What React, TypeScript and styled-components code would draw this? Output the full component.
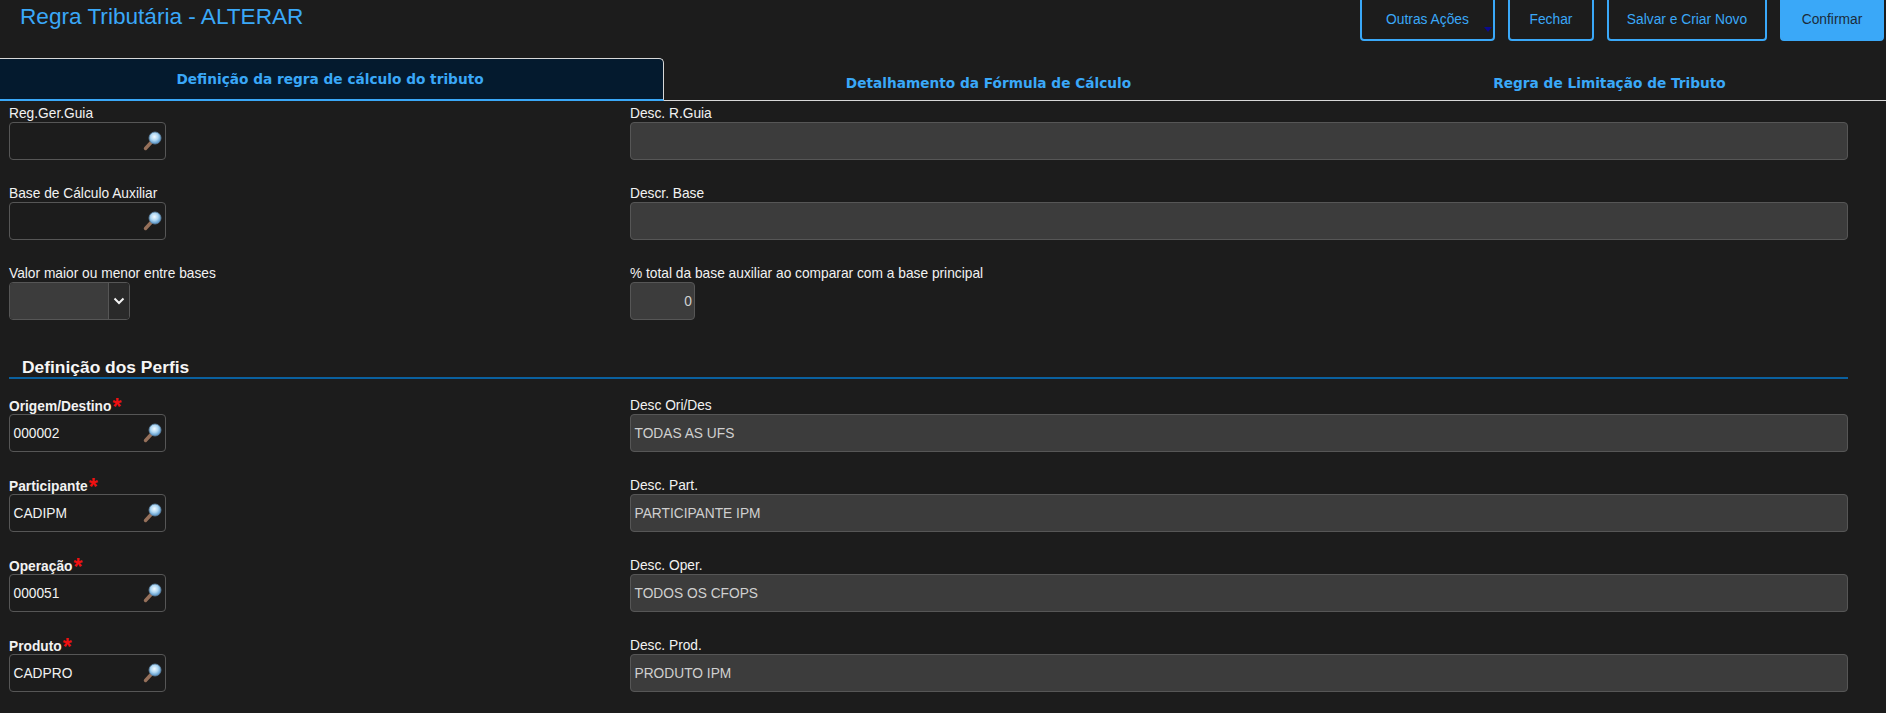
import { createGlobalStyle } from "styled-components";
import styled from "styled-components";

const GlobalStyle = createGlobalStyle`
    html, body {
        margin: 0;
        padding: 0;
        height: 713px;
        overflow: hidden;
        background: #1c1c1c;
        font-family: "Liberation Sans", Arial, sans-serif;
    }
    * { box-sizing: border-box; }
`

const Page = styled.div`
    width: 1886px;
    height: 713px;
    overflow: hidden;
    background: #1c1c1c;
`

const Header = styled.div`
    display: flex;
    justify-content: space-between;
    height: 58px;
    padding-left: 20px;
`

const Title = styled.h1`
    margin: 0;
    font-size: 22.6px;
    font-weight: 400;
    line-height: 34px;
    color: #3aa8f8;
`

const Actions = styled.div`
    display: flex;
    align-items: flex-start;
    gap: 13px;
    padding-right: 2px;
    margin-top: -4px;
`

const ActionButton = styled.button<{ $primary?: boolean; $w: number }>`
    position: relative;
    width: ${(p) => p.$w}px;
    height: 45px;
    border: 2px solid #3aa8f8;
    border-radius: 4px;
    background: ${(p) => (p.$primary ? "#3aa8f8" : "transparent")};
    color: ${(p) => (p.$primary ? "#1c2b3a" : "#3aa8f8")};
    font-family: inherit;
    font-size: 13.8px;
    padding: 2px 0 0;
`

const Caret = styled.span`
    position: absolute;
    right: 1px;
    bottom: 7px;
    width: 0;
    height: 0;
    border-left: 4px solid transparent;
    border-right: 4px solid transparent;
    border-top: 5px solid #0a0a8c;
`

const TabBar = styled.div`
    display: flex;
    height: 43px;
    border-bottom: 1px solid #d8d8d8;
`

const Tab = styled.div<{ $active?: boolean; $w: number; $shift?: number }>`
    width: ${(p) => p.$w}px;
    height: ${(p) => (p.$active ? "43px" : "42px")};
    display: flex;
    align-items: ${(p) => (p.$active ? "center" : "flex-end")};
    justify-content: center;
    padding-bottom: ${(p) => (p.$active ? "0" : "9px")};
    padding-left: ${(p) => p.$shift ?? 0}px;
    font-family: "DejaVu Sans", Verdana, sans-serif;
    font-size: 13.7px;
    font-weight: 700;
    color: #3aa8f8;
    ${(p) =>
        p.$active &&
        `
        background: #041a2e;
        border: 1px solid #d8d8d8;
        border-left: none;
        border-bottom: 2px solid #3aa8f8;
        border-top-right-radius: 5px;
        padding-right: 3px;
    `}
`

const Form = styled.div`
    padding: 3px 38px 0 9px;
`

const Row = styled.div`
    display: grid;
    grid-template-columns: 621px 1fr;
    height: 80px;
`

const Field = styled.div`
    display: flex;
    flex-direction: column;
    align-items: flex-start;
`

const Label = styled.label<{ $bold?: boolean }>`
    display: block;
    height: 18px;
    font-size: 13.75px;
    line-height: ${(p) => (p.$bold ? 22 : 20)}px;
    font-weight: ${(p) => (p.$bold ? 700 : 400)};
    color: #f2f2f2;
    white-space: nowrap;
`

const Star = styled.span`
    position: relative;
    top: 4px;
    color: #f01010;
    font-size: 23px;
    font-weight: 700;
    line-height: 14px;
    vertical-align: top;
    margin-left: 1px;
`

const InputBox = styled.div<{ $disabled?: boolean; $w?: number; $right?: boolean }>`
    width: ${(p) => (p.$w ? `${p.$w}px` : "100%")};
    height: 38px;
    display: flex;
    align-items: center;
    justify-content: ${(p) => (p.$right ? "flex-end" : "space-between")};
    padding: 0 2px 0 3.5px;
    border: 1px solid #565656;
    border-radius: 4px;
    background: ${(p) => (p.$disabled ? "#3c3c3c" : "transparent")};
    color: ${(p) => (p.$disabled ? "#d0d0d0" : "#f2f2f2")};
    font-size: 13.75px;
`

const SelectBox = styled.div`
    width: 121px;
    height: 38px;
    display: flex;
    border: 1px solid #565656;
    border-radius: 4px;
    overflow: hidden;
`

const SelectValue = styled.div`
    width: 99px;
    background: #3c3c3c;
    border-right: 1px solid #565656;
`

const SelectArrow = styled.div`
    flex: 1;
    display: flex;
    align-items: center;
    justify-content: center;
    background: #2a2a2a;
`

const Section = styled.div`
    height: 44px;
    margin-top: -9px;
    margin-bottom: 17px;
    display: flex;
    align-items: flex-end;
    padding: 0 0 1px 13px;
    border-bottom: 2px solid #0a609f;
    font-size: 17.4px;
    line-height: 18px;
    font-weight: 700;
    color: #f6f6f6;
`

const Magnifier = () => (
    <svg width="20" height="20" viewBox="0 0 20 20">
        <defs>
            <radialGradient id="lens" cx="45%" cy="40%" r="60%">
                <stop offset="0%" stopColor="#f4fbff" />
                <stop offset="50%" stopColor="#b0d8f3" />
                <stop offset="100%" stopColor="#4f8fc4" />
            </radialGradient>
        </defs>
        <path d="M8.5 11 L2.5 17.5" stroke="#96705a" strokeWidth="3.4" strokeLinecap="round" />
        <circle cx="12" cy="7" r="6" fill="url(#lens)" stroke="#5f84a3" strokeWidth="0.8" />
    </svg>
)

const Chevron = () => (
    <svg width="12" height="8" viewBox="0 0 12 8">
        <path d="M1.5 1.5 L6 6 L10.5 1.5" fill="none" stroke="#f4f4f4" strokeWidth="2" />
    </svg>
)

type LookupRowProps = {
    label: string
    descLabel: string
    code?: string
    desc?: string
    required?: boolean
}

const LookupRow = ({ label, descLabel, code, desc, required }: LookupRowProps) => (
    <Row>
        <Field>
            <Label $bold={required}>
                {label}
                {required && <Star>*</Star>}
            </Label>
            <InputBox $w={157}>
                <span>{code}</span>
                <Magnifier />
            </InputBox>
        </Field>
        <Field>
            <Label>{descLabel}</Label>
            <InputBox $disabled>{desc}</InputBox>
        </Field>
    </Row>
)

const perfis = [
    { label: "Origem/Destino", descLabel: "Desc Ori/Des", code: "000002", desc: "TODAS AS UFS" },
    { label: "Participante", descLabel: "Desc. Part.", code: "CADIPM", desc: "PARTICIPANTE IPM" },
    { label: "Operação", descLabel: "Desc. Oper.", code: "000051", desc: "TODOS OS CFOPS" },
    { label: "Produto", descLabel: "Desc. Prod.", code: "CADPRO", desc: "PRODUTO IPM" },
]

const App = () => {
    return (
        <Page>
            <GlobalStyle />
            <Header>
                <Title>Regra Tributária - ALTERAR</Title>
                <Actions>
                    <ActionButton $w={135}>
                        Outras Ações
                        <Caret />
                    </ActionButton>
                    <ActionButton $w={86}>Fechar</ActionButton>
                    <ActionButton $w={160}>Salvar e Criar Novo</ActionButton>
                    <ActionButton $w={104} $primary>Confirmar</ActionButton>
                </Actions>
            </Header>
            <TabBar>
                <Tab $active $w={664}>Definição da regra de cálculo do tributo</Tab>
                <Tab $w={649}>Detalhamento da Fórmula de Cálculo</Tab>
                <Tab $w={573} $shift={20}>Regra de Limitação de Tributo</Tab>
            </TabBar>
            <Form>
                <LookupRow label="Reg.Ger.Guia" descLabel="Desc. R.Guia" />
                <LookupRow label="Base de Cálculo Auxiliar" descLabel="Descr. Base" />
                <Row>
                    <Field>
                        <Label>Valor maior ou menor entre bases</Label>
                        <SelectBox>
                            <SelectValue />
                            <SelectArrow><Chevron /></SelectArrow>
                        </SelectBox>
                    </Field>
                    <Field>
                        <Label>% total da base auxiliar ao comparar com a base principal</Label>
                        <InputBox $disabled $w={65} $right>0</InputBox>
                    </Field>
                </Row>
                <Section>Definição dos Perfis</Section>
                {perfis.map((p) => (
                    <LookupRow key={p.label} {...p} required />
                ))}
            </Form>
        </Page>
    )
}

export default App;
